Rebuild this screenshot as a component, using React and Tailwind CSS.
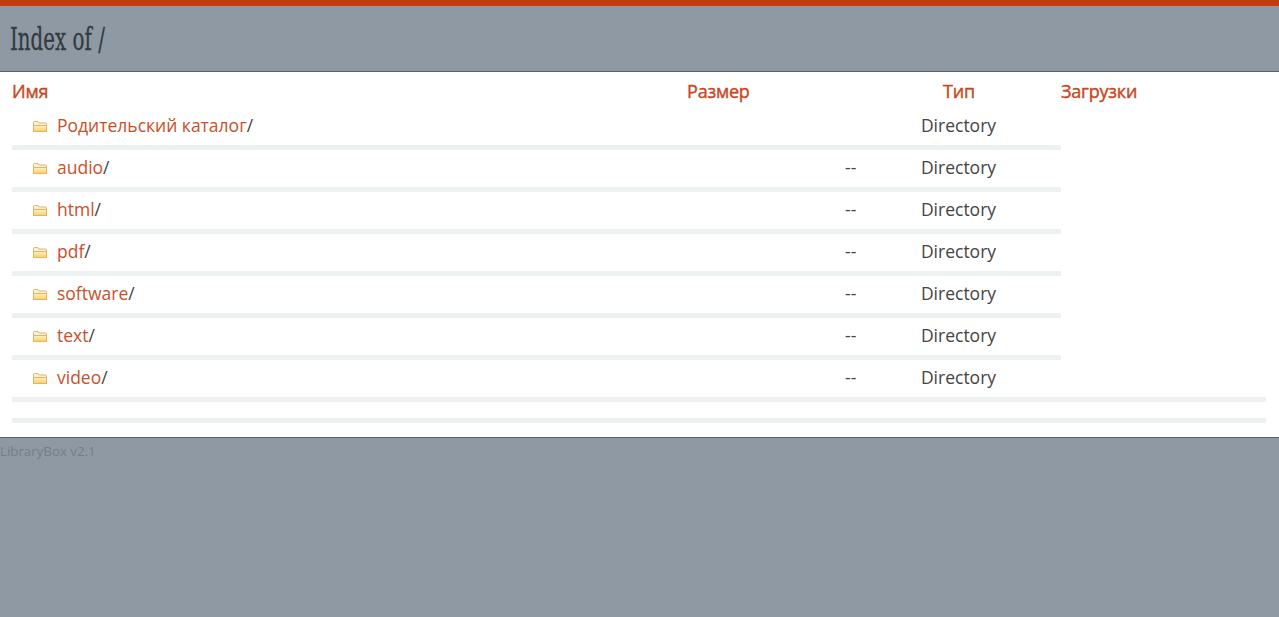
const FONT = "font-['Open_Sans','Noto_Sans',sans-serif]";

const rows = [
  { name: "Родительский каталог", size: "" },
  { name: "audio", size: "--" },
  { name: "html", size: "--" },
  { name: "pdf", size: "--" },
  { name: "software", size: "--" },
  { name: "text", size: "--" },
  { name: "video", size: "--" },
];

function FolderIcon() {
  return (
    <svg width="16" height="13" viewBox="0 0 16 13" className="block mt-[2px]">
      <defs>
        <linearGradient id="folderFill" x1="0" y1="0" x2="0" y2="1">
          <stop offset="0" stopColor="#fff3c4" />
          <stop offset="1" stopColor="#fbcf5e" />
        </linearGradient>
      </defs>
      <path d="M1.5 11.5V2.5a1 1 0 0 1 1-1h3.5l1 1.5h6.5a1 1 0 0 1 1 1v7.5z" fill="#f6f1e0" stroke="#e0b565" />
      <path d="M1.5 11.5V5.5h13v6z" fill="url(#folderFill)" stroke="#e0b565" />
    </svg>
  );
}

export default function App() {
  return (
    <div className={`${FONT} min-h-[617px] bg-[#8f99a3]`}>
      <div className="h-[72px] border-t-[6px] border-b border-t-[#c43c12] border-b-[#5a6068] pl-[10px] pt-[2px] flex items-center">
        <h1 className="font-['DejaVu_Serif',serif] text-[31px] leading-none text-[#333a40] scale-x-[0.64] origin-left whitespace-nowrap [-webkit-text-stroke:0.3px_#333a40]">
          Index of /
        </h1>
      </div>

      <div className="bg-white h-[366px] border-b border-[#5a6068] pl-3 pr-[13px]">
        <div className="flex h-[36px] pt-[2px] items-center text-[18px] text-[#c8471e] tracking-[-0.2px] [-webkit-text-stroke:0.4px_#c8471e]">
          <div className="w-[549px]">Имя</div>
          <div className="w-[294px] pl-[126px]">Размер</div>
          <div className="w-[206px] pl-[2px] text-center">Тип</div>
          <div>Загрузки</div>
        </div>
        {rows.map((row, i) => (
          <div
            key={row.name}
            className={`flex h-[42px] pb-[2px] items-center border-b-[5px] border-[#eef1f2] text-[17.5px] text-[#444] ${i === rows.length - 1 ? "" : "w-[1049px]"}`}
          >
            <div className="w-[45px] pl-5">
              <FolderIcon />
            </div>
            <div className="w-[788px]">
              <a className="text-[#c8502a]">{row.name}</a>/
            </div>
            <div className="w-[10px] whitespace-nowrap">{row.size}</div>
            <div className="w-[206px] pl-[1px] text-center">Directory</div>
          </div>
        ))}
        <div className="h-[21px] border-b-[5px] border-[#eef1f2]" />
      </div>

      <div className="pt-[4px] text-[13.3px] text-[#757d86]">LibraryBox v2.1</div>
    </div>
  );
}
